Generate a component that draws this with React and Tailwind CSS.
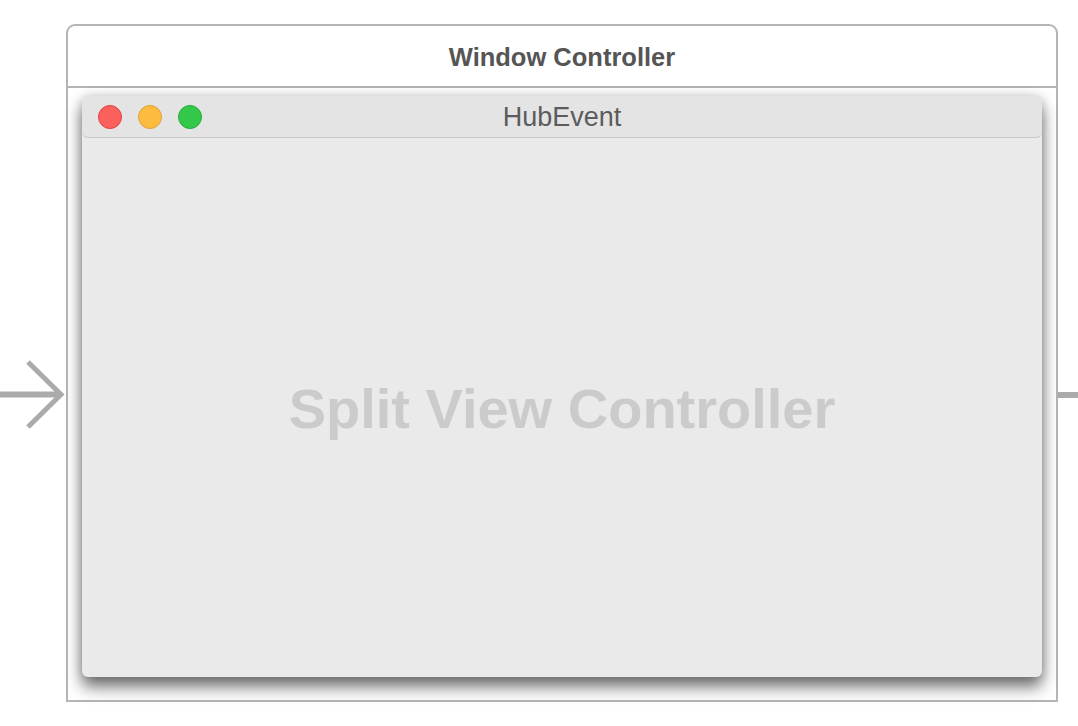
export default function App() {
  return (
    <div
      className="relative w-[1078px] h-[726px] bg-white overflow-hidden"
      style={{ fontFamily: '"Liberation Sans", Arial, sans-serif' }}
    >
      {/* incoming connector arrow */}
      <svg className="absolute left-0 top-[355px]" width="66" height="80" viewBox="0 355 66 80">
        <line x1="0" y1="394.5" x2="61" y2="394.5" stroke="#ababab" strokeWidth="6" />
        <polyline points="28,362 61,394.5 28,427" fill="none" stroke="#ababab" strokeWidth="5" />
      </svg>
      {/* outgoing connector */}
      <div className="absolute left-[1058px] top-[392px] w-[20px] h-[6px] bg-[#ababab]" />

      <div className="ml-[66px] mt-[24px] w-[992px] h-[678px] border-2 border-[#b5b5b5] rounded-t-[9px] flex flex-col bg-white">
        <div className="h-[62px] shrink-0 flex items-center justify-center border-b-2 border-[#b5b5b5]">
          <span className="text-[25.5px] font-bold text-[#555555] leading-none pt-[4px]">Window Controller</span>
        </div>
        <div className="flex-1 pt-[8px] px-[14px] pb-[23px] flex">
          <div className="flex-1 flex flex-col bg-[#eaeaea] rounded-[6px] shadow-[0_10px_16px_rgba(0,0,0,0.55),0_0_12px_rgba(0,0,0,0.18)]">
            <div className="relative h-[42px] shrink-0 bg-[#e4e4e4] rounded-[6px] border-b border-[#c6c6c6] flex items-center">
              <div className="flex items-center gap-[16px] pl-[16px] pt-[1px]">
                <div className="w-[24px] h-[24px] rounded-full bg-[#fc605c] border border-[#e0443e]" />
                <div className="w-[24px] h-[24px] rounded-full bg-[#fdbc40] border border-[#dea236]" />
                <div className="w-[24px] h-[24px] rounded-full bg-[#34c84a] border border-[#27aa35]" />
              </div>
              <div className="absolute inset-0 flex items-center justify-center pt-[2px]">
                <span className="text-[27px] text-[#5c5c5c] leading-none">HubEvent</span>
              </div>
            </div>
            <div className="flex-1 flex items-center justify-center">
              <span className="text-[56px] font-bold text-[#cbcbcb] leading-none pt-[2px]">Split View Controller</span>
            </div>
          </div>
        </div>
      </div>
    </div>
  );
}
